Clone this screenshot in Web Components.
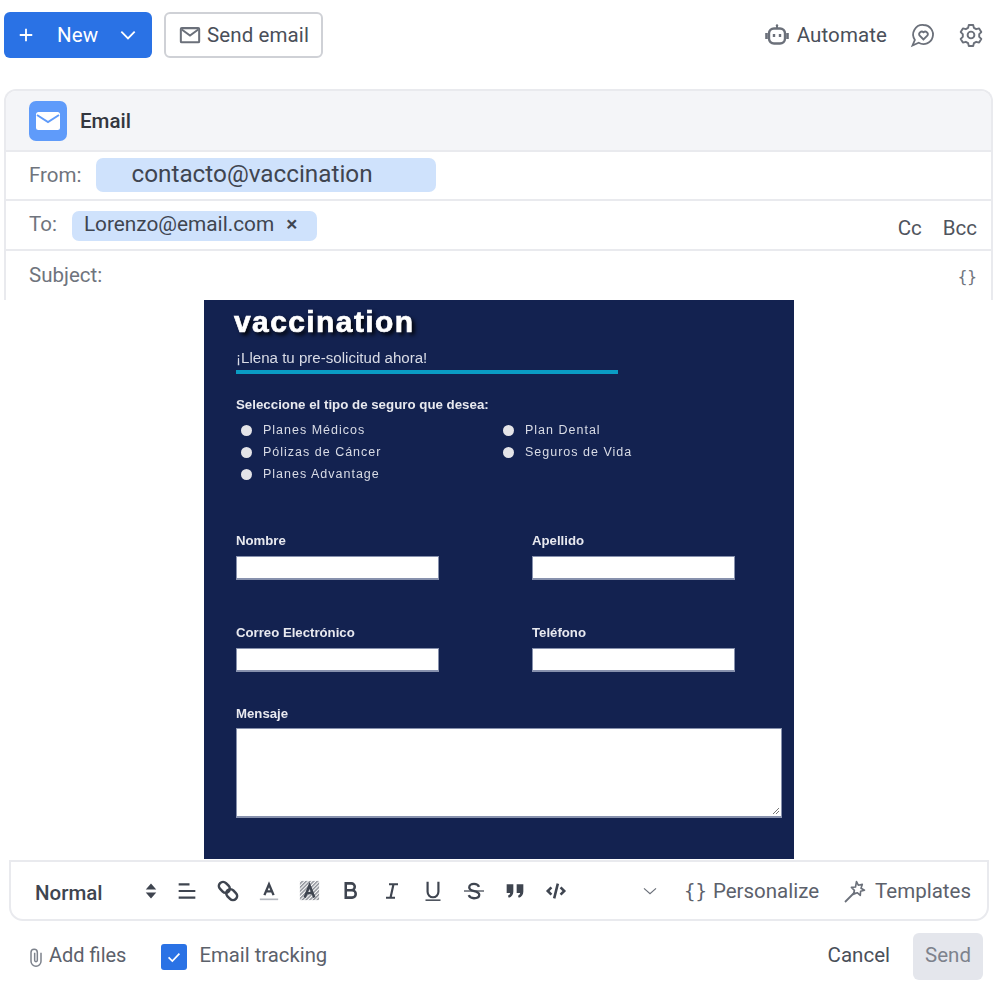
<!DOCTYPE html>
<html lang="en">
<head>
<meta charset="utf-8">
<title>Email</title>
<style>
	html, body { margin: 0; background: #fff; }
	body { font-family: Roboto, "Liberation Sans", sans-serif; color: #3f4550; }
</style>
</head>
<body>
<email-composer></email-composer>
<script>
const ICONS = {
	plus: `<path d="M12 4.500v15M4.500 12h15" fill="none" stroke="currentColor" stroke-width="2.200"/>`,
	chev: `<path d="M4 8l8 8 8-8" fill="none" stroke="currentColor" stroke-width="2.200"/>`,
	mail: `<rect x="2" y="4.500" width="20" height="15.500" rx="1" fill="none" stroke="currentColor" stroke-width="2.200"/><path d="M3 6l9 6.500L21 6" fill="none" stroke="currentColor" stroke-width="2.200"/>`,
	robot: `<path d="M12 2v3" stroke="currentColor" stroke-width="2"/><circle cx="12" cy="2.500" r="1.200" fill="currentColor"/><rect x="4" y="5.500" width="16" height="15" rx="5" fill="none" stroke="currentColor" stroke-width="2.400"/><path d="M1.500 10v6M22.500 10v6" stroke="currentColor" stroke-width="2.600"/><path d="M9 11v3M15 11v3" stroke="currentColor" stroke-width="2.400"/>`,
	chat: `<path d="M12.500 2a9.500 9.500 0 1 1-4.800 17.700L1.500 22.500l2.400-5.600A9.500 9.500 0 0 1 12.500 2z" fill="none" stroke="currentColor" stroke-width="1.800"/><path d="M12.500 16.500l-4-4a2.600 2.600 0 0 1 4-3.200 2.600 2.600 0 0 1 4 3.200z" fill="none" stroke="currentColor" stroke-width="1.800"/>`,
	gear: `<path d="M9.800 2h4.400l.7 2.900 2.300 1.300 2.900-.8 2.200 3.700-2.100 2.100v2.600l2.100 2.100-2.200 3.700-2.900-.8-2.300 1.300-.7 2.900H9.800l-.7-2.900-2.300-1.300-2.900.8-2.200-3.700 2.100-2.100v-2.600L1.700 9.100l2.200-3.700 2.900.8 2.300-1.300z" fill="none" stroke="currentColor" stroke-width="1.900" stroke-linejoin="round"/><circle cx="12" cy="12" r="3.400" fill="none" stroke="currentColor" stroke-width="1.900"/>`,
	updown: `<path d="M12 2l7 8H5zM12 22l-7-8h14z" fill="currentColor"/>`,
	align: `<path d="M2 4h13M2 12h20M2 20h20" stroke="currentColor" stroke-width="2.600" fill="none"/>`,
	link: `<g fill="none" stroke="currentColor" stroke-width="2.800"><rect x="1.500" y="3.500" width="13" height="9" rx="4.500" transform="rotate(45 8 8)"/><rect x="9.500" y="11.500" width="13" height="9" rx="4.500" transform="rotate(45 16 16)"/></g>`,
	color: `<path d="M6.500 17L12 4l5.500 13M8.500 12.500h7" fill="none" stroke="currentColor" stroke-width="2.800"/><path d="M1 22h22" stroke="#b4b8bf" stroke-width="2"/>`,
	hilite: `<rect x="1" y="1" width="22" height="22" fill="url(#hatch)"/><path d="M6.500 20L12 6l5.500 14M8.500 15h7" fill="none" stroke="#3f4550" stroke-width="2.800"/><defs><pattern id="hatch" width="3" height="3" patternUnits="userSpaceOnUse" patternTransform="rotate(45)"><rect width="1.700" height="3" fill="#8d9098"/></pattern></defs>`,
	bold: `<path d="M6 3h7a4.400 4.400 0 0 1 0 8.800H6zM6 11.800h8a4.600 4.600 0 0 1 0 9.200H6z" fill="none" stroke="currentColor" stroke-width="3.200"/>`,
	italic: `<path d="M8 3h12M4 21h12M14 3l-4 18" fill="none" stroke="currentColor" stroke-width="2.900"/>`,
	under: `<path d="M5.500 1v12a6.500 6.500 0 0 0 13 0V1" fill="none" stroke="currentColor" stroke-width="2.600"/><path d="M3 23h18" stroke="currentColor" stroke-width="1.800"/>`,
	strike: `<path d="M18 7c-1-2.400-3-3.500-6-3.500-3.500 0-5.700 1.600-5.700 4.200 0 5.800 12 3 12 8.800 0 2.800-2.600 4.200-6.300 4.200-3 0-5.300-1.200-6.300-3.700" fill="none" stroke="currentColor" stroke-width="2.800"/><path d="M0 12h24" stroke="currentColor" stroke-width="1.500"/>`,
	quote: `<path d="M2 4h8v8.500c0 4-2 6.500-5.500 7.500l-1-2.200c1.800-.8 2.600-2 2.700-3.300H2zM14 4h8v8.500c0 4-2 6.500-5.500 7.500l-1-2.200c1.800-.8 2.600-2 2.700-3.300H14z" fill="currentColor"/>`,
	code: `<path d="M7 8l-4 4 4 4M17 8l4 4-4 4M14 4l-4 16" fill="none" stroke="currentColor" stroke-width="2.800"/>`,
	chevThin: `<path d="M3 8l9 8 9-8" fill="none" stroke="currentColor" stroke-width="1.800"/>`,
	wand: `<path d="M2 23l10-10" stroke="currentColor" stroke-width="1.800"/><path d="M13.500 2.500l1.800 3.700 4-.8-1.300 3.800 3.500 2-3.900 1.100-.3 4.100-3.100-2.700-3.700 1.600.9-4-3-2.900 4.100-.4z" fill="none" stroke="currentColor" stroke-width="1.600" stroke-linejoin="round"/>`,
	clip: `<path d="M18 7v10a6 6 0 0 1-12 0V6.500a3.800 3.800 0 0 1 7.600 0V16a1.600 1.600 0 0 1-3.200 0V7" fill="none" stroke="currentColor" stroke-width="1.800"/>`,
	check: `<path d="M5.500 12.500l4.500 4.500 8.500-9" fill="none" stroke="#fff" stroke-width="2"/>`
};

class UiIcon extends HTMLElement {
	connectedCallback(){
		const size = this.getAttribute("size") || 24;
		this.attachShadow({mode:"open"}).innerHTML = `
			<style>
				:host { display: inline-flex; flex: none; }
				svg { display: block; overflow: visible; }
			</style>
			<svg width="${size}" height="${size}" viewBox="0 0 24 24">${ICONS[this.getAttribute("name")]}</svg>
		`;
	}
}
customElements.define("ui-icon",UiIcon);

class TopBar extends HTMLElement {
	constructor(){
		super();
		this.attachShadow({mode:"open"}).innerHTML = `
			<style>
				:host { display: flex; align-items: center; height: 46px; margin: 12px 17px 0 4px; font-size: 20.500px; letter-spacing: .1px; }
				#new { display: flex; align-items: center; width: 148px; height: 46px; box-sizing: border-box; padding: 0 14px 0 12px; background: #2a72e5; border-radius: 6px; color: #fff; }
				#new span { margin: 0 auto 0 21px; }
				#send { display: flex; align-items: center; gap: 6px; margin-left: 12px; width: 159px; height: 46px; box-sizing: border-box; padding: 0 12px 0 13px; background: #fff; border: 2px solid #cfd1d6; border-radius: 6px; color: #4a4f59; white-space: nowrap; }
				#right { display: flex; align-items: center; margin-left: auto; color: #4a4f59; }
				#right span { margin: 0 24px 0 8px; }
				#right ui-icon + ui-icon { margin-left: 24px; }
			</style>
			<div id="new"><ui-icon name="plus" size="20"></ui-icon><span>New</span><ui-icon name="chev" size="20"></ui-icon></div>
			<div id="send"><ui-icon name="mail" size="22" style="color:#6b707a"></ui-icon>Send email</div>
			<div id="right">
				<ui-icon name="robot" size="24" style="color:#6b707a"></ui-icon><span>Automate</span>
				<ui-icon name="chat" size="24" style="color:#6b707a"></ui-icon><ui-icon name="gear" size="24" style="color:#6b707a"></ui-icon>
			</div>
		`;
	}
}
customElements.define("top-bar",TopBar);

class MailRow extends HTMLElement {
	constructor(){
		super();
		this.attachShadow({mode:"open"}).innerHTML = `
			<style>
				:host { display: flex; align-items: center; height: 50px; box-sizing: border-box; border-bottom: 2px solid #e9eaee; padding: 0 14px 2px 23px; color: #6f747d; font-size: 20.500px; }
				:host(:last-child) { border-bottom: 0; }
				#end { margin-left: auto; display: flex; gap: 21px; color: #4f545d; }
			</style>
			<slot></slot><div id="end"><slot name="end"></slot></div>
		`;
	}
}
customElements.define("mail-row",MailRow);

class MailChip extends HTMLElement {
	constructor(){
		super();
		this.attachShadow({mode:"open"}).innerHTML = `
			<style>
				:host { display: flex; align-items: center; background: #cfe2fc; border-radius: 7px; color: #3f4550; }
			</style>
			<slot></slot>
		`;
	}
}
customElements.define("mail-chip",MailChip);

class MailCard extends HTMLElement {
	constructor(){
		super();
		this.attachShadow({mode:"open"}).innerHTML = `
			<style>
				:host { display: block; margin: 31px 7px 0 4px; height: 211px; box-sizing: border-box; border: 2px solid #e9eaee; border-bottom: 0; border-radius: 12px 12px 0 0; overflow: hidden; }
				header { display: flex; align-items: center; gap: 13px; height: 61px; box-sizing: border-box; padding: 0 23px; background: #f4f5f8; border-bottom: 2px solid #e9eaee; font-size: 20.500px; font-weight: 500; color: #33373f; }
				#badge { display: flex; align-items: center; justify-content: center; width: 38px; height: 40px; background: #5f9bfa; border-radius: 7px; color: #fff; }
				#badge svg { display: block; }
				mail-row.first { height: 49px; }
				mail-chip.from { width: 340px; height: 34px; margin-left: 15px; box-sizing: border-box; padding: 0 0 2px 35px; font-size: 24.300px; }
				mail-chip.to { height: 30px; box-sizing: border-box; margin: 4px 0 0 15px; padding: 0 20px 4px 12px; font-size: 20.800px; }
				mail-chip.to i { font-style: normal; margin-left: 12px; font-size: 21px; font-weight: 500; }
				.cc { padding-top: 7px; }
				.sub { font-family: "DejaVu Sans Mono", monospace; font-size: 16px; color: #6f747d; padding-top: 2px; }
			</style>
			<header>
				<div id="badge"><svg width="24" height="18" viewBox="0 0 24 18"><rect width="24" height="18" rx="2.500" fill="#fff"/><path d="M1 3l11 7 11-7" fill="none" stroke="#5f9bfa" stroke-width="2"/></svg></div>
				Email
			</header>
			<mail-row class="first">From:<mail-chip class="from">contacto@vaccination</mail-chip></mail-row>
			<mail-row>To:<mail-chip class="to">Lorenzo@email.com<i>×</i></mail-chip><span slot="end" class="cc">Cc</span><span slot="end" class="cc">Bcc</span></mail-row>
			<mail-row>Subject:<span slot="end" class="sub">{}</span></mail-row>
		`;
	}
}
customElements.define("mail-card",MailCard);

class FormOption extends HTMLElement {
	constructor(){
		super();
		this.attachShadow({mode:"open"}).innerHTML = `
			<style>
				:host { display: flex; align-items: center; gap: 11px; height: 22px; padding-left: 5px; font-size: 12.500px; letter-spacing: 1px; color: #d9dce6; white-space: nowrap; }
				b { width: 11px; height: 11px; border-radius: 50%; background: #e4e4e8; }
			</style>
			<b></b><slot></slot>
		`;
	}
}
customElements.define("form-option",FormOption);

class FormField extends HTMLElement {
	constructor(){
		super();
		this.attachShadow({mode:"open"}).innerHTML = `
			<style>
				:host { display: block; font-size: 13.200px; font-weight: 700; color: #e8e9ef; line-height: 14px; }
				div { margin-top: 8px; height: 24px; box-sizing: border-box; background: #fff; border: 1px solid #8791ad; border-bottom-width: 2px; }
				:host([area]) div { margin-top: 7px; height: 90px; position: relative; }
			</style>
			<slot></slot><div><slot name="grip"></slot></div>
		`;
	}
}
customElements.define("form-field",FormField);

class FormPreview extends HTMLElement {
	constructor(){
		super();
		this.attachShadow({mode:"open"}).innerHTML = `
			<style>
				:host { display: block; width: 590px; height: 559px; margin-left: 204px; box-sizing: border-box; padding: 5px 12px 0 32px; background: #132250; font-family: "Liberation Sans", Arial, sans-serif; color: #e8e9ef; filter: blur(.4px); }
				h1 { margin: 0 0 0 -2px; font-size: 30px; line-height: 34px; font-weight: 700; letter-spacing: 1.400px; color: #fff; -webkit-text-stroke: .7px #fff; text-shadow: 3px 3px 4px #000; }
				#sub { margin-top: 10px; font-size: 15.100px; line-height: 17px; color: #d9dce6; }
				#rule { margin-top: 4px; width: 382px; height: 4px; background: #0a9cc4; }
				#ask { margin-top: 24px; font-size: 13.300px; line-height: 14px; font-weight: 700; }
				#opts { display: grid; grid-template-columns: 262px auto; margin-top: 7px; }
				#grid { display: grid; grid-template-columns: 203px 203px; column-gap: 93px; row-gap: 46px; margin-top: 49px; }
				form-field[area] { margin-top: 35px; }
				#grip { position: absolute; right: 1px; bottom: 1px; display: block; }
			</style>
			<h1>vaccination</h1>
			<div id="sub">¡Llena tu pre-solicitud ahora!</div>
			<div id="rule"></div>
			<div id="ask">Seleccione el tipo de seguro que desea:</div>
			<div id="opts">
				<form-option>Planes Médicos</form-option><form-option>Plan Dental</form-option>
				<form-option>Pólizas de Cáncer</form-option><form-option>Seguros de Vida</form-option>
				<form-option>Planes Advantage</form-option>
			</div>
			<div id="grid">
				<form-field>Nombre</form-field><form-field>Apellido</form-field>
				<form-field>Correo Electrónico</form-field><form-field>Teléfono</form-field>
			</div>
			<form-field area>Mensaje<svg id="grip" slot="grip" width="8" height="8" viewBox="0 0 8 8"><path d="M1 7l6-6M4 7l3-3" stroke="#777" stroke-width="1"/></svg></form-field>
		`;
	}
}
customElements.define("form-preview",FormPreview);

class FormatBar extends HTMLElement {
	constructor(){
		super();
		this.attachShadow({mode:"open"}).innerHTML = `
			<style>
				:host { display: flex; align-items: center; height: 61px; box-sizing: border-box; margin: 1px 11px 0 9px; padding: 0 16px 0 24px; border: 2px solid #e9eaee; border-radius: 0 0 14px 14px; color: #3f4550; }
				#style { font-size: 20.500px; font-weight: 500; width: 95px; padding-top: 4px; color: #3f4550; }
				#tools { display: flex; align-items: center; }
				#tools ui-icon { width: 41px; justify-content: center; }
				#right { margin-left: auto; display: flex; align-items: center; font-size: 20.500px; color: #5c616b; }
				#right ui-icon { color: #6b707a; }
				.b { font-family: "DejaVu Sans Mono", monospace; font-size: 19px; margin: 0 6px 0 0; }
			</style>
			<div id="style">Normal</div>
			<div id="tools">
				<ui-icon name="updown" size="18" style="margin-right:-5px"></ui-icon>
				<ui-icon name="align" size="20"></ui-icon>
				<ui-icon name="link" size="22"></ui-icon>
				<ui-icon name="color" size="20"></ui-icon>
				<ui-icon name="hilite" size="21"></ui-icon>
				<ui-icon name="bold" size="19"></ui-icon>
				<ui-icon name="italic" size="18"></ui-icon>
				<ui-icon name="under" size="20"></ui-icon>
				<ui-icon name="strike" size="20"></ui-icon>
				<ui-icon name="quote" size="20"></ui-icon>
				<ui-icon name="code" size="22"></ui-icon>
			</div>
			<div id="right">
				<ui-icon name="chevThin" size="16" style="margin-right:26px"></ui-icon>
				<span class="b">{}</span>Personalize
				<ui-icon name="wand" size="24" style="margin:0 8px 0 24px"></ui-icon>Templates
			</div>
		`;
	}
}
customElements.define("format-bar",FormatBar);

class FooterBar extends HTMLElement {
	constructor(){
		super();
		this.attachShadow({mode:"open"}).innerHTML = `
			<style>
				:host { display: flex; align-items: center; height: 47px; margin: 12px 17px 0 26px; font-size: 20px; color: #5c616b; }
				span { padding-bottom: 3px; }
				#track { font-size: 20.300px; }
				#box { display: flex; align-items: center; justify-content: center; width: 26px; height: 26px; margin: 0 12px 0 35px; background: #2a72e5; border-radius: 3px; }
				#cancel { margin-left: auto; color: #4a4f59; padding-bottom: 3px; font-size: 20.500px; }
				#send { display: flex; align-items: center; justify-content: center; width: 70px; height: 47px; margin-left: 23px; background: #e4e6ec; border-radius: 6px; color: #7d828c; font-size: 20.500px; padding-bottom: 3px; box-sizing: border-box; }
			</style>
			<ui-icon name="clip" size="20" style="color:#7d828c;margin-right:3px"></ui-icon><span>Add files</span>
			<div id="box"><ui-icon name="check" size="20"></ui-icon></div><span id="track">Email tracking</span>
			<div id="cancel">Cancel</div>
			<div id="send">Send</div>
		`;
	}
}
customElements.define("footer-bar",FooterBar);

class EmailComposer extends HTMLElement {
	constructor(){
		super();
		this.attachShadow({mode:"open"}).innerHTML = `
			<style>
				:host { display: block; width: 1000px; height: 1000px; overflow: hidden; }
			</style>
			<top-bar></top-bar>
			<mail-card></mail-card>
			<form-preview></form-preview>
			<format-bar></format-bar>
			<footer-bar></footer-bar>
		`;
	}
}
customElements.define("email-composer",EmailComposer);
</script>
</body>
</html>
